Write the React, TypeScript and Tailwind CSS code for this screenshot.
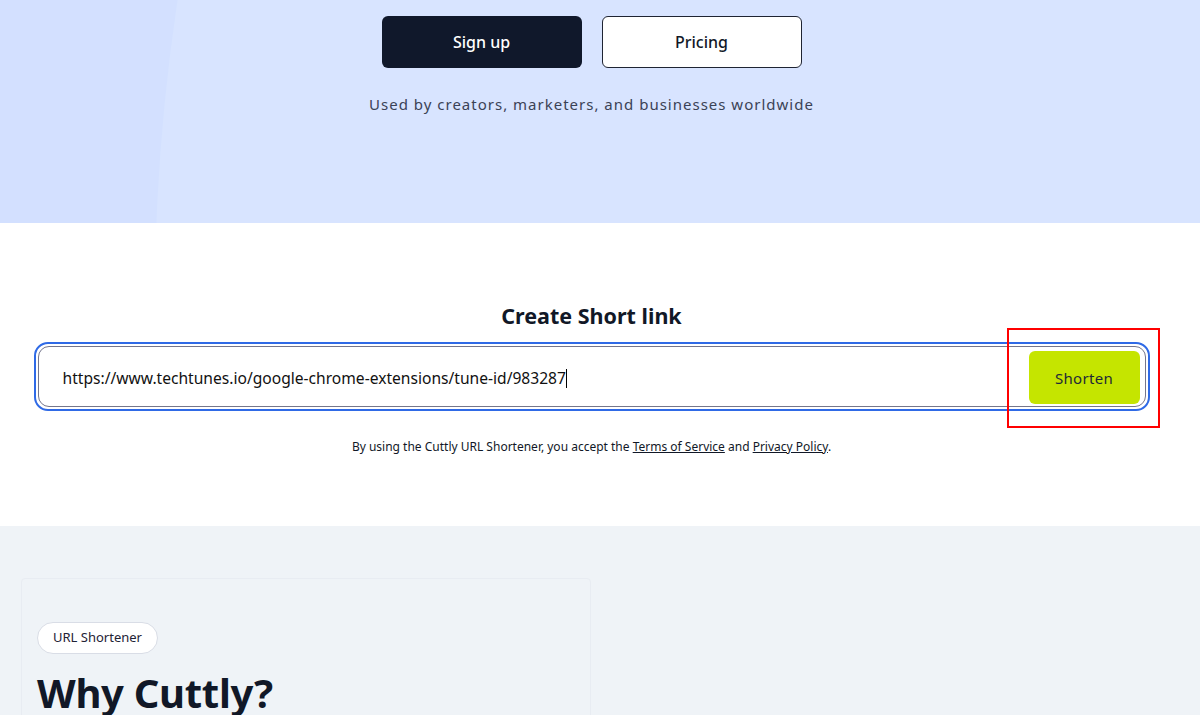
import React from "react";

const font = { fontFamily: '"Noto Sans", "Open Sans", Arial, sans-serif' };

export default function App() {
  return (
    <div className="relative w-[1200px] h-[715px] overflow-hidden bg-white" style={font}>
      {/* Hero */}
      <section className="relative h-[223px] bg-[#d3e0ff] overflow-hidden">
        <div className="absolute left-[155px] top-[-1700px] w-[4000px] h-[4000px] rounded-full bg-[#d8e4ff]" />
        <div className="relative w-[1183px] flex flex-col items-center pt-4">
          <div className="flex gap-5">
            <button className="w-[200px] h-[52px] rounded-md bg-[#10182b] text-white text-[16px] font-medium">
              Sign up
            </button>
            <button className="w-[200px] h-[52px] rounded-md bg-white border border-[#1f2433] text-[#111827] text-[16px] font-medium">
              Pricing
            </button>
          </div>
          <p className="mt-[25px] text-[15px] tracking-[1px] text-[#3b4256]">
            Used by creators, marketers, and businesses worldwide
          </p>
        </div>
      </section>

      {/* Shortener */}
      <section className="h-[303px] bg-white">
        <div className="w-[1183px] flex flex-col items-center pt-[79px]">
          <h2 className="text-[21.5px] font-bold text-[#111827] leading-[28px]">Create Short link</h2>
          <div className="mt-[12px] w-[1116px] h-[69px] rounded-[14px] border-2 border-[#2f6ae6] p-[2px]">
            <div className="h-full rounded-[11px] border border-[#75768c] flex items-center pl-[24px] pr-[5px]">
              <div className="flex-1 flex items-center pt-[4px] text-[15.6px] text-[#111111]">
                <span>https://www.techtunes.io/google-chrome-extensions/tune-id/983287</span>
                <span className="w-px h-[19px] bg-black" />
              </div>
              <button className="w-[111px] h-[53px] mt-[2px] pt-[2px] rounded-md bg-[#c5e500] text-[15px] text-[#1f2937] tracking-[0.3px]">
                Shorten
              </button>
            </div>
          </div>
          <p className="mt-[27px] text-[12px] text-[#111827]">
            By using the Cuttly URL Shortener, you accept the{" "}
            <span className="underline">Terms of Service</span> and{" "}
            <span className="underline">Privacy Policy</span>.
          </p>
        </div>
      </section>

      {/* Why Cuttly */}
      <section className="h-[200px] bg-[#eff3f7] pt-[52px]">
        <div className="w-[1183px] flex">
          <div className="ml-[21px] w-[570px] h-[300px] border border-[#e8ecf2] rounded-sm pt-[43px] pl-[15px]">
            <span className="inline-flex items-center h-[32px] px-[15px] rounded-full bg-white border border-[#d9dde6] text-[13px] text-[#1e2235]">
              URL Shortener
            </span>
            <h2 className="mt-[15px] text-[40px] font-bold tracking-[-0.3px] text-[#111827] leading-[48px]">Why Cuttly?</h2>
          </div>
        </div>
      </section>

      {/* annotation */}
      <div className="absolute left-[1007px] top-[328px] w-[153px] h-[100px] border-2 border-[#ff0000]" />
    </div>
  );
}
